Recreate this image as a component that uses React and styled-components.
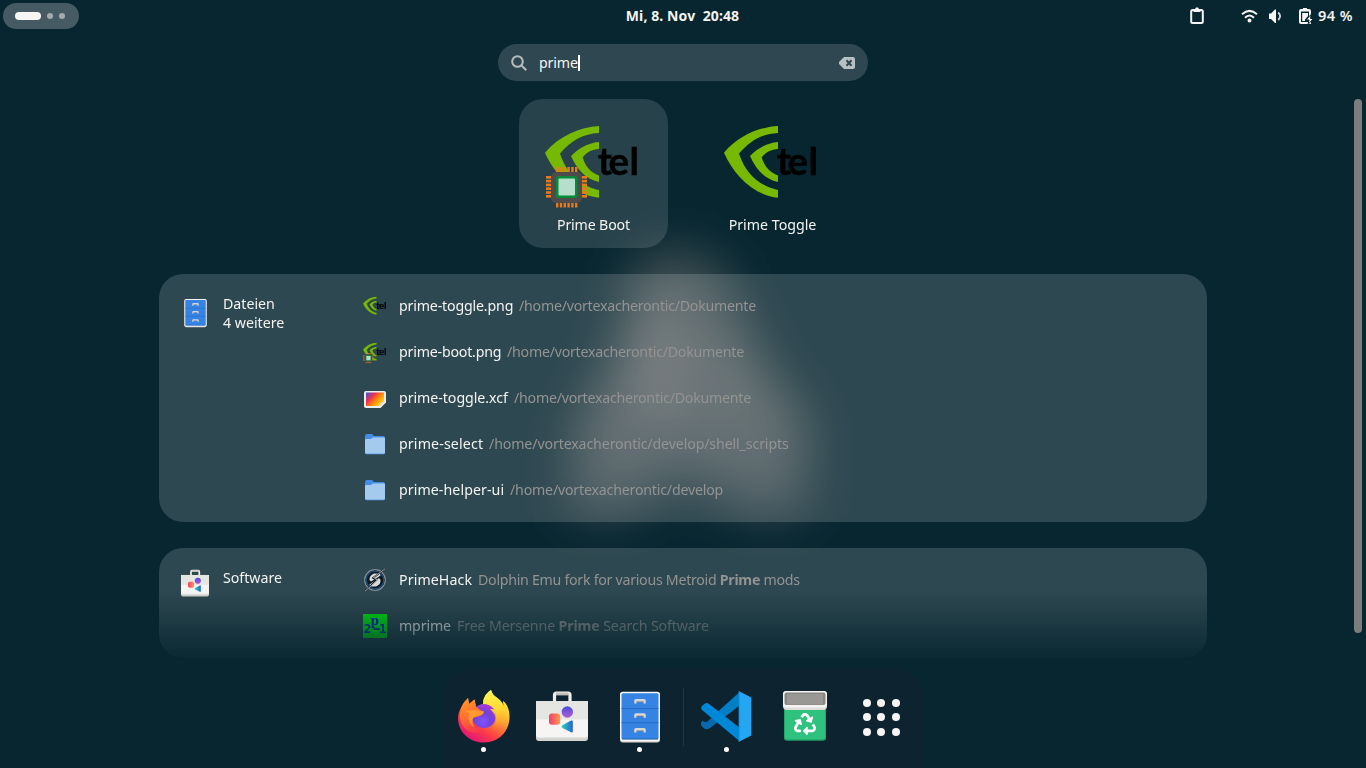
import React from "react";
import styled, { createGlobalStyle } from "styled-components";
import { FaRecycle } from "react-icons/fa";

const Global = createGlobalStyle`
  * { box-sizing: border-box; }
  body { margin: 0; background: #072630; overflow: hidden; }
  svg { display: block; flex: none; overflow: visible; }
`;

const Desktop = styled.div`
  position: relative;
  width: 1366px;
  height: 768px;
  overflow: hidden;
  display: flex;
  flex-direction: column;
  align-items: center;
  background: #072630;
  color: #f4f4f2;
  font: 14.2px "Noto Sans", sans-serif;
`;
const Wallpaper = styled.svg`
  position: absolute;
  inset: 0;
`;
const TopBar = styled.header`
  position: relative;
  width: 100%;
  height: 32px;
  display: grid;
  grid-template-columns: 1fr auto 1fr;
  align-items: center;
  padding: 0 13px 0 3px;
`;
const Workspaces = styled.div`
  width: 76px;
  height: 26px;
  border-radius: 13px;
  background: #455a62;
  display: flex;
  align-items: center;
  padding-left: 12px;
  gap: 6px;
`;
const Dot = styled.i`
  width: ${(p) => (p.$active ? 26 : 6)}px;
  height: ${(p) => (p.$active ? 8 : 6)}px;
  border-radius: 4px;
  background: ${(p) => (p.$active ? "#f6f5f3" : "#a2acae")};
`;
const Label = styled.span`
  white-space: pre;
  font-size: ${(p) => p.$size || 14.2}px;
  font-weight: ${(p) => p.$weight || 400};
  letter-spacing: ${(p) => p.$track || 0}px;
  line-height: 19px;
  color: ${(p) => (p.$dim ? "#939392" : "inherit")};
  b { font-weight: 700; }
`;
const Clock = styled.div`
  padding: 0 0 2px 9px;
`;
const Status = styled.div`
  display: flex;
  align-items: center;
  justify-content: flex-end;
  padding-bottom: 1px;
`;
const StatusGlyph = styled.svg`
  margin-right: ${(p) => p.$after}px;
`;
const Search = styled.div`
  position: relative;
  width: 370px;
  height: 37px;
  margin-top: 12px;
  border-radius: 19px;
  background: #2f4750;
  display: flex;
  align-items: center;
  padding: 0 13px;
`;
const Query = styled.div`
  flex: 1;
  display: flex;
  align-items: center;
  margin-left: 12px;
`;
const Caret = styled.i`
  width: 2px;
  height: 16px;
  background: #fff;
`;
const Results = styled.main`
  position: relative;
  width: 100%;
  height: 562px;
  margin-top: 18px;
  overflow: hidden;
  display: flex;
  flex-direction: column;
  align-items: center;
  gap: 26px;
  mask-image: linear-gradient(#000 493px, transparent 566px);
`;
const Scrollbar = styled.div`
  position: absolute;
  right: 4px;
  top: 99px;
  width: 8px;
  height: 534px;
  border-radius: 4px;
  background: #7d7d7c;
`;
const Apps = styled.section`
  display: flex;
  gap: 30px;
`;
const AppTile = styled.div`
  width: 149px;
  height: 149px;
  border-radius: 24px;
  background: ${(p) => (p.$selected ? "rgba(255,255,255,0.13)" : "transparent")};
  display: flex;
  flex-direction: column;
  align-items: center;
  padding-top: 16px;
  gap: 4px;
  svg { margin-right: 2px; }
`;
const Card = styled.section`
  flex: none;
  width: 1048px;
  border-radius: 24px;
  background: rgba(255, 255, 255, 0.158);
  display: flex;
  padding: 9px 20px;
`;
const Provider = styled.div`
  width: 184px;
  display: flex;
  gap: 12px;
  padding-top: 11px;
`;
const ProviderIcon = styled.div`
  width: 32px;
  display: flex;
  justify-content: center;
  padding-top: ${(p) => p.$drop}px;
`;
const ProviderText = styled.div`
  display: flex;
  flex-direction: column;
`;
const List = styled.div`
  flex: 1;
`;
const Row = styled.div`
  height: 46px;
  display: flex;
  align-items: center;
  ${Label} { margin-top: -2px; }
`;
const Name = styled.div`
  width: ${(p) => p.$width}px;
  margin-left: 12px;
  margin-right: 6px;
  display: flex;
`;
const Dock = styled.nav`
  position: relative;
  width: 480px;
  height: 100px;
  margin-top: 7px;
  border-radius: 28px 28px 0 0;
  background: #0d2430;
  display: flex;
  padding: 0 2px;
`;
const DockItem = styled.div`
  width: 78px;
  display: flex;
  flex-direction: column;
  align-items: center;
  padding-top: 17px;
`;
const DockIcon = styled.div`
  height: 60px;
  padding-top: ${(p) => p.$drop || 0}px;
`;
const Running = styled.i`
  width: 5px;
  height: 5px;
  margin: 2px 1px 0 0;
  border-radius: 50%;
  background: #fff;
`;
const Divider = styled.i`
  width: 1px;
  height: 58px;
  margin: 20px 4px 0;
  background: #23363f;
`;
const AppGrid = styled.div`
  width: 74px;
  display: grid;
  grid-template-columns: repeat(3, 8px);
  gap: 6.5px;
  align-content: start;
  justify-content: center;
  padding-top: 30.5px;
`;
const GridDot = styled.i`
  width: 8px;
  height: 8px;
  border-radius: 50%;
  background: #f6f5f3;
`;
const Recycle = styled(FaRecycle)`
  color: #fff;
`;

function PrimeLogo({ size, chip }) {
  const pins = [0, 1, 2, 3, 4, 5];
  return (
    <svg width={size} height={size} viewBox="0 0 96 96">
      <g fill="#76b900">
        <path d="M54 11C35 12 14 21 0 37.7C10 60 29 80 54 82.7V75C36 71 22 60 15 38.5C27 25 38 19 54 18Z" />
        <path d="M54 27C42 28 33 34 26 41C32 54 40 64 54 67V60.5C46 58 40 51 37.7 42.3C42 37 47 34.5 54 34Z" />
      </g>
      <text x="52.8 63.6 84.4" y="60.2" fontFamily="Lato, sans-serif" fontWeight="700" fontSize="38.5" stroke="#000" strokeWidth="0.4">tel</text>
      {chip && (
        <g>
          <g fill="#e87a1c">
            {pins.map((n) => (
              <React.Fragment key={n}>
                <rect x={11 + n * 3.8} y="52" width="2.4" height="5.5" />
                <rect x={11 + n * 3.8} y="87" width="2.4" height="5.5" />
                <rect x="1" y={61 + n * 3.8} width="5.5" height="2.6" />
                <rect x="36.5" y={61 + n * 3.8} width="5.5" height="2.6" />
              </React.Fragment>
            ))}
          </g>
          <rect x="6" y="57" width="31" height="31" rx="5" fill="#4f4b4a" />
          <rect x="11" y="61" width="21.5" height="22" rx="2.5" fill="#078b39" />
          <rect x="13.5" y="63.5" width="16.5" height="17" rx="1" fill="#b6dfcb" />
        </g>
      )}
    </svg>
  );
}

function Cabinet({ size }) {
  return (
    <svg width={size} height={size} viewBox="0 0 56 56">
      <rect x="8" y="4" width="40" height="50.5" rx="3" fill="#d5d3cf" />
      <rect x="8" y="3.7" width="40" height="49.5" rx="3" fill="#f6f5f4" />
      <rect x="9.5" y="5.3" width="37" height="46" rx="1.5" fill="#3584e4" />
      {[11, 25.2, 40].map((y, i) => (
        <g key={y}>
          {i < 2 && <path d={`M9.5 ${y + 9.5}H46.5`} stroke="#2269c4" strokeWidth=".9" />}
          <path d={`M22.2 ${y + 4.6}V${y + 1.7}Q22.2 ${y} 24 ${y}H32Q33.8 ${y} 33.8 ${y + 1.7}V${y + 4.6}H31.5V${y + 2.8}H24.5V${y + 4.6}Z`} fill="#d9d8d5" />
          <path d={`M24.5 ${y + 2.9}H31.5`} stroke="#868789" strokeWidth=".8" />
        </g>
      ))}
      <path d="M10 51H46" stroke="#1c5eb4" strokeWidth=".9" />
    </svg>
  );
}

function Bag({ size, id }) {
  return (
    <svg width={size} height={size} viewBox="0 0 56 56">
      <defs>
        <linearGradient id={`${id}-a`}><stop stopColor="#f43c70" /><stop offset="1" stopColor="#ff9a49" /></linearGradient>
        <linearGradient id={`${id}-b`} x2="0" y2="1"><stop stopColor="#474cdf" /><stop offset="1" stopColor="#b55bd0" /></linearGradient>
        <linearGradient id={`${id}-c`}><stop stopColor="#29d3b5" /><stop offset="1" stopColor="#2861d5" /></linearGradient>
      </defs>
      <path d="M20.5 15V7Q20.5 5 22.5 5H34Q36 5 36 7V15" fill="none" stroke="#efeeeb" strokeWidth="3.2" />
      <path d="M22 6H34.5" stroke="#c0bfbb" strokeWidth="2.8" />
      <path d="M2 13H54V50Q54 53 51 53H5Q2 53 2 50Z" fill="#d5d4d0" />
      <path d="M2 13H54V47Q54 49.5 51 49.5H5Q2 49.5 2 47Z" fill="#f6f5f4" />
      <path d="M2 13H54V31.5H2Z" fill="#e5e5e1" />
      <rect x="15" y="25.5" width="11.2" height="11.2" rx="3" fill={`url(#${id}-a)`} />
      <circle cx="33.3" cy="24" r="5.7" fill={`url(#${id}-b)`} />
      <path d="M38.8 33.5V43.5Q38.8 45 37 44.3L28.5 40Q26.7 38.5 28.5 37.3L37 32.5Q38.8 32 38.8 33.5Z" fill={`url(#${id}-c)`} />
    </svg>
  );
}

function Firefox() {
  return (
    <svg width="56" height="60" viewBox="0 0 56 60">
      <defs>
        <linearGradient id="fx-body" x1=".85" y1=".1" x2=".25" y2=".98">
          <stop stopColor="#fff44f" /><stop offset=".25" stopColor="#ffc62c" /><stop offset=".48" stopColor="#ff7f35" /><stop offset=".72" stopColor="#fb3a49" /><stop offset="1" stopColor="#e2147c" />
        </linearGradient>
        <radialGradient id="fx-core" cx=".45" cy=".72" r=".7"><stop stopColor="#7c55ff" /><stop offset=".55" stopColor="#7440d6" /><stop offset="1" stopColor="#a53bd8" /></radialGradient>
        <linearGradient id="fx-flame" x1=".5" y1="0" x2=".65" y2="1"><stop stopColor="#fff44f" /><stop offset=".45" stopColor="#ffda36" /><stop offset="1" stopColor="#ff9a2a" stopOpacity="0" /></linearGradient>
        <linearGradient id="fx-head" x1=".2" y1="0" x2=".5" y2="1"><stop stopColor="#ff9b22" /><stop offset=".5" stopColor="#ff7032" /><stop offset="1" stopColor="#fb3a49" /></linearGradient>
      </defs>
      <path d="M12 13C8 17 7 19 6 21C3 26 2 29 2 33C2 47 13.5 57.5 28 57.5C43 57.5 53.5 46 53.5 32C53.5 24 51 19 47 16L48 21C46 17 43 14 40 12C37 10 36 8 35 5C29 9 27 14 27 19L20 22L18.5 14.5L13 19Z" fill="url(#fx-body)" />
      <circle cx="28" cy="31" r="12" fill="url(#fx-core)" />
      <path d="M35 5C29 9 27 14 27 19C32 18.5 36 20.5 39 24.5L34 24C41 29 42 40 35 46C44 44 51 37 52 27C51.5 22 50 18 47 16L48 21C46 17 43 14 40 12C37 10 36 8 35 5Z" fill="url(#fx-flame)" />
      <path d="M12 13C8 17 7 19 6 21C3 27 3 35 7 41C11 47 18 49 26 47C19 44 15 39 16.5 33C21 32 26 31 28 27.5C25 26 22 23 20 22L18.5 14.5L13 19Z" fill="url(#fx-head)" />
      <path d="M9 27C14 24 19 25.5 27.5 26Q28.5 27.5 27 29C24 31 20 31 17 33C16 36 16 38 18 42C12 38 11 32 14 28.5Z" fill="#ffa42e" opacity=".8" />
    </svg>
  );
}

function Code() {
  return (
    <svg width="56" height="60" viewBox="0 0 56 60">
      <path d="M41 4.5L9 34Q5 36 3.5 33.5Q1 36 2.5 39L6 42Q8.5 43 11 41L41 18Z" fill="#0869ae" />
      <path d="M41 5L14 29L20 34L41 18Z" fill="#007fc5" />
      <path d="M3 23Q1 20.5 3.5 18.5L6 16.5Q8 15.5 10 17L41 41V54.5Z" fill="#0088d8" />
      <path d="M40 4.2L52.3 10.5V48.5L40 54.8V42Z" fill="#24a6f2" />
      <path d="M40 4.2V54.8" stroke="#128bd3" strokeWidth=".8" />
    </svg>
  );
}

function Trash() {
  return (
    <svg width="56" height="60" viewBox="0 0 56 60">
      <path d="M7 18H49V51Q49 53.8 46 53.8H10Q7 53.8 7 51Z" fill="#219c63" />
      <path d="M7.8 18H48.2V50Q48.2 52.5 45.5 52.5H10.5Q7.8 52.5 7.8 50Z" fill="#2fc27e" />
      <rect x="6" y="4" width="44" height="19" rx="4" fill="#dedddb" />
      <rect x="6" y="4" width="44" height="16.5" rx="3" fill="#f5f4f2" />
      <rect x="7.5" y="5.5" width="41" height="12.5" rx="2" fill="#878683" />
      <rect x="10" y="7" width="36" height="10.5" fill="#999894" />
      <Recycle x="17" y="26" size="22" />
    </svg>
  );
}

function Folder() {
  return (
    <svg width="24" height="24" viewBox="0 0 24 24">
      <path d="M2 4Q2 2 4 2H9L11 4H20Q22 4 22 6V20H2Z" fill="#438de6" />
      <path d="M2 8Q2 7 3 7H8L10 5.5H21Q22 5.5 22 6.5V21Q22 22.3 20.5 22.3H3.5Q2 22.3 2 21Z" fill="#629fea" />
      <path d="M2 8Q2 7 3 7H8L10 5.5H21Q22 5.5 22 6.5V20.5Q22 21.5 20.5 21.5H3.5Q2 21.5 2 20.5Z" fill="#a4caee" />
    </svg>
  );
}

function ImageDoc() {
  return (
    <svg width="24" height="24" viewBox="0 0 24 24">
      <defs><linearGradient id="doc" x1="0" y1=".1" x2="1" y2=".8"><stop stopColor="#4d4ed0" /><stop offset=".32" stopColor="#ef324b" /><stop offset=".65" stopColor="#ff9800" /><stop offset="1" stopColor="#ffe640" /></linearGradient></defs>
      <path d="M3 5H21Q23 5 23 7V16.5L17.5 22H3Q1 22 1 20V7Q1 5 3 5Z" fill="#f0eeec" />
      <path d="M3 6.5H21V15L16 20H3Z" fill="url(#doc)" />
      <path d="M16.5 21L18 16.5L22.5 15.5Z" fill="#dedddd" />
    </svg>
  );
}

function PrimeHack() {
  return (
    <svg width="24" height="24" viewBox="0 0 24 24">
      <circle cx="12" cy="12" r="10.3" fill="#101820" stroke="#858e91" strokeWidth="1.2" />
      <circle cx="12" cy="12" r="8.8" fill="none" stroke="#1d4e7d" strokeWidth="1.3" />
      <path d="M17 5.5L11 5.5Q6 7.5 6.5 12L8 13.5L13 10.5L17.5 7.5Z" fill="#d9dbdc" />
      <path d="M7 18.5H13Q18 16.5 17.5 12L16 10L11 13.5L6.5 16.5Z" fill="#d9dbdc" />
      <path d="M22 .8L10 10L13.5 12L2 23.2" fill="none" stroke="#14191f" strokeWidth="1.6" />
      <path d="M22 .8L10.5 9.5L14.5 12L2 23.2" fill="none" stroke="#b9bdbe" strokeWidth=".9" />
    </svg>
  );
}

function Mersenne() {
  return (
    <svg width="24" height="24" viewBox="0 0 24 24">
      <rect width="24" height="24" fill="#00f010" />
      <g fill="#0026c8" fontFamily="DejaVu Sans Mono, monospace" fontWeight="700">
        <text x=".8" y="19.3" fontSize="12.5">2</text>
        <text x="7.5" y="10.8" fontSize="12" fontFamily="DejaVu Serif, serif">p</text>
        <text x="16" y="19.3" fontSize="12.5">1</text>
      </g>
      <path d="M10.5 15H17" stroke="#0026c8" strokeWidth="1.6" />
    </svg>
  );
}

const docs = "/home/vortexacherontic/Dokumente";
const files = [
  { icon: <PrimeLogo size={24} />, name: "prime-toggle.png", width: 114, track: -0.17, path: docs, pathTrack: -0.25 },
  { icon: <PrimeLogo size={24} chip />, name: "prime-boot.png", width: 102, track: -0.2, path: docs, pathTrack: -0.25 },
  { icon: <ImageDoc />, name: "prime-toggle.xcf", width: 109, track: -0.05, path: docs, pathTrack: -0.25 },
  { icon: <Folder />, name: "prime-select", width: 84, track: 0.14, path: "/home/vortexacherontic/develop/shell_scripts", pathTrack: -0.13 },
  { icon: <Folder />, name: "prime-helper-ui", width: 105, track: 0.07, path: "/home/vortexacherontic/develop", pathTrack: -0.2 },
];

export default function App() {
  return (
    <Desktop>
      <Global />
      <Wallpaper width="1366" height="768">
        <defs>
          <filter id="soft" x="-60%" y="-60%" width="220%" height="220%"><feGaussianBlur stdDeviation="25" /></filter>
          <filter id="wide" x="-80%" y="-80%" width="260%" height="260%"><feGaussianBlur stdDeviation="20" /></filter>
          <linearGradient id="spire" x1="0" y1="0" x2="0" y2="1">
            <stop stopColor="#6f7170" stopOpacity=".52" />
            <stop offset=".5" stopColor="#747675" stopOpacity=".7" />
            <stop offset="1" stopColor="#6d6f72" stopOpacity=".5" />
          </linearGradient>
        </defs>
        <path d="M632 262Q675 238 718 262L742 320L768 375L808 420L805 515H750L683 475L625 515H568L576 425L608 370L626 310Z" fill="url(#spire)" filter="url(#soft)" />
        <ellipse cx="662" cy="360" rx="22" ry="60" fill="#7a7c7a" opacity=".36" filter="url(#wide)" />
      </Wallpaper>

      <TopBar>
        <Workspaces><Dot $active /><Dot /><Dot /></Workspaces>
        <Clock><Label $weight={700} $size={14} $track={0.1}>Mi, 8. Nov  20:48</Label></Clock>
        <Status>
          <StatusGlyph $after={36} width="16" height="18" viewBox="0 0 16 18" fill="none">
            <rect x="2.2" y="3" width="11.6" height="13" rx="1.5" stroke="#f6f5f3" strokeWidth="2" />
            <path d="M4.5 2H6L7 .5H9L10 2H11.5V5H4.5Z" fill="#f6f5f3" />
          </StatusGlyph>
          <StatusGlyph $after={10} width="17" height="16" viewBox="0 0 17 16" fill="none" stroke="#f6f5f3" strokeWidth="2">
            <path d="M1 6.3Q8.5-.5 16 6.3" /><path d="M4 9.8Q8.5 5.3 13 9.8" /><circle cx="8.5" cy="12.5" r="1.3" fill="#f6f5f3" strokeWidth="1.4" />
          </StatusGlyph>
          <StatusGlyph $after={14} width="16" height="16" viewBox="0 0 16 16" fill="#f6f5f3">
            <path d="M1 5.5H3L7 1.5H8V15H7L3 11H1Z" /><path d="M10.2 4.5Q14 8.2 10.2 12" fill="none" stroke="#d5dad9" strokeWidth="1.8" />
          </StatusGlyph>
          <StatusGlyph $after={4} width="16" height="18" viewBox="0 0 16 18">
            <path d="M5 2V1H9V2H11Q13 2 13 4V17H3Q1 17 1 15V4Q1 2 3 2Z" fill="#f6f5f3" />
            <path d="M3 4.5H11V15H3Z" fill="#072630" />
            <path d="M4.2 6H10V9L7 12.5V14H4.2Z" fill="#f6f5f3" />
            <path d="M13 7.5L8 13H11L10 17.5L15.5 11.5H12.5Z" fill="#f6f5f3" stroke="#072630" strokeWidth="1" />
          </StatusGlyph>
          <Label $weight={600} $size={14.6} $track={0.45}>94 %</Label>
        </Status>
      </TopBar>

      <Search>
        <svg width="16" height="16" viewBox="0 0 16 16" fill="none" stroke="#b3bcbf" strokeWidth="2"><circle cx="6.5" cy="6.5" r="5.3" /><path d="M10.5 10.5L15.3 15.3" /></svg>
        <Query><Label $track={-0.15}>prime</Label><Caret /></Query>
        <svg width="16" height="12" viewBox="0 0 16 12"><path d="M5 0H14Q16 0 16 2V10Q16 12 14 12H5L0 7V5Z" fill="#b7c0c3" /><path d="M7.5 3.3L12.5 8.7M12.5 3.3L7.5 8.7" stroke="#2f4750" strokeWidth="2" /></svg>
      </Search>

      <Results>
        <Apps>
          <AppTile $selected><PrimeLogo size={96} chip /><Label $track={-0.15}>Prime Boot</Label></AppTile>
          <AppTile><PrimeLogo size={96} /><Label>Prime Toggle</Label></AppTile>
        </Apps>
        <Card>
          <Provider>
            <ProviderIcon $drop={3}><Cabinet size={31} /></ProviderIcon>
            <ProviderText><Label>Dateien</Label><Label>4 weitere</Label></ProviderText>
          </Provider>
          <List>
            {files.map((f) => (
              <Row key={f.name}>
                {f.icon}
                <Name $width={f.width}><Label $track={f.track}>{f.name}</Label></Name>
                <Label $dim $track={f.pathTrack}>{f.path}</Label>
              </Row>
            ))}
          </List>
        </Card>
        <Card>
          <Provider>
            <ProviderIcon $drop={0}><Bag size={30} id="small-bag" /></ProviderIcon>
            <ProviderText><Label>Software</Label></ProviderText>
          </Provider>
          <List>
            <Row><PrimeHack /><Name $width={73}><Label $track={0.1}>PrimeHack</Label></Name><Label $dim $track={-0.28}>Dolphin Emu fork for various Metroid <b>Prime</b> mods</Label></Row>
            <Row><Mersenne /><Name $width={52}><Label $track={-0.15}>mprime</Label></Name><Label $dim $track={-0.13}>Free Mersenne <b>Prime</b> Search Software</Label></Row>
          </List>
        </Card>
      </Results>
      <Scrollbar />

      <Dock>
        <DockItem><DockIcon><Firefox /></DockIcon><Running /></DockItem>
        <DockItem><DockIcon $drop={3}><Bag size={56} id="bag" /></DockIcon></DockItem>
        <DockItem><DockIcon $drop={3}><Cabinet size={56} /></DockIcon><Running /></DockItem>
        <Divider />
        <DockItem><DockIcon $drop={2}><Code /></DockIcon><Running /></DockItem>
        <DockItem><DockIcon $drop={2}><Trash /></DockIcon></DockItem>
        <AppGrid>{Array.from({ length: 9 }, (_, i) => <GridDot key={i} />)}</AppGrid>
      </Dock>
    </Desktop>
  );
}
